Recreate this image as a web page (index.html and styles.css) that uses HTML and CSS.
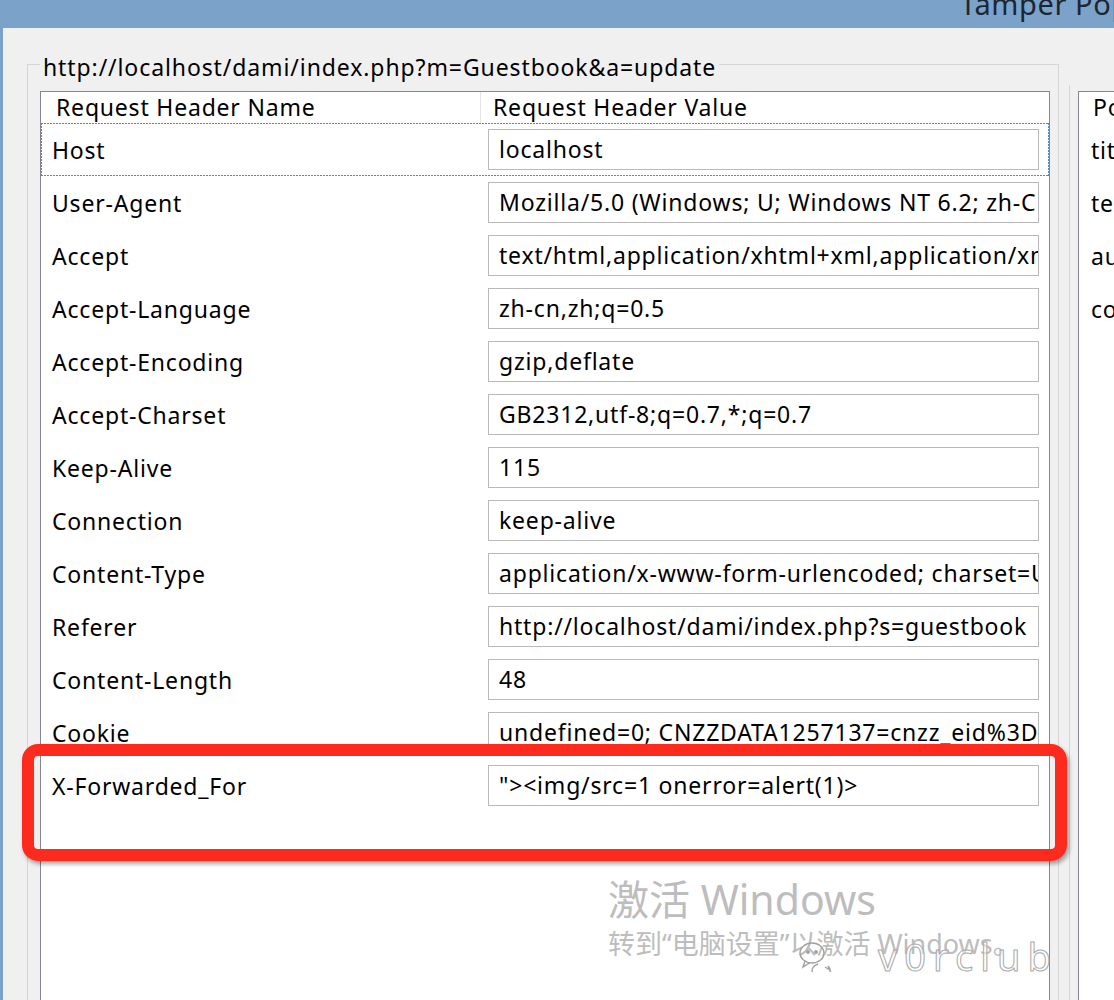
FILE: index.html
```html
<!DOCTYPE html>
<html>
<head>
<meta charset="utf-8">
<link rel="stylesheet" href="styles.css">
</head>
<body>
<div class="titlebar"><span class="title">Tamper Popup</span></div>
<div class="window">
  <fieldset class="group main">
    <legend>http://localhost/dami/index.php?m=Guestbook&amp;a=update</legend>
    <div class="list">
      <div class="head">
        <div class="hname">Request Header Name</div>
        <div class="hvalue">Request Header Value</div>
      </div>
      <div class="row focused"><div class="name">Host</div><div class="value"><div class="box">localhost</div></div></div>
      <div class="row"><div class="name">User-Agent</div><div class="value"><div class="box">Mozilla/5.0 (Windows; U; Windows NT 6.2; zh-CN; rv:1.9.2.8) Gecko/20100722 Firefox/3.6.8</div></div></div>
      <div class="row"><div class="name">Accept</div><div class="value"><div class="box">text/html,application/xhtml+xml,application/xml;q=0.9,*/*;q=0.8</div></div></div>
      <div class="row"><div class="name">Accept-Language</div><div class="value"><div class="box">zh-cn,zh;q=0.5</div></div></div>
      <div class="row"><div class="name">Accept-Encoding</div><div class="value"><div class="box">gzip,deflate</div></div></div>
      <div class="row"><div class="name">Accept-Charset</div><div class="value"><div class="box">GB2312,utf-8;q=0.7,*;q=0.7</div></div></div>
      <div class="row"><div class="name">Keep-Alive</div><div class="value"><div class="box">115</div></div></div>
      <div class="row"><div class="name">Connection</div><div class="value"><div class="box">keep-alive</div></div></div>
      <div class="row"><div class="name">Content-Type</div><div class="value"><div class="box">application/x-www-form-urlencoded; charset=UTF-8</div></div></div>
      <div class="row"><div class="name">Referer</div><div class="value"><div class="box">http://localhost/dami/index.php?s=guestbook</div></div></div>
      <div class="row"><div class="name">Content-Length</div><div class="value"><div class="box">48</div></div></div>
      <div class="row"><div class="name">Cookie</div><div class="value"><div class="box">undefined=0; CNZZDATA1257137=cnzz_eid%3D1234567890</div></div></div>
      <div class="row"><div class="name">X-Forwarded_For</div><div class="value"><div class="box">"&gt;&lt;img/src=1 onerror=alert(1)&gt;</div></div></div>
    </div>
  </fieldset>
  <div class="splitter"></div>
  <fieldset class="group side">
    <div class="list">
      <div class="head"><div class="hname">Post Parameter Name</div></div>
      <div class="row"><div class="name">title</div></div>
      <div class="row"><div class="name">text</div></div>
      <div class="row"><div class="name">author</div></div>
      <div class="row"><div class="name">content</div></div>
    </div>
  </fieldset>
</div>
<div class="highlight"></div>
<div class="watermark">
  <div class="wm1">激活 Windows</div>
  <div class="wm2">转到“电脑设置”以激活 Windows。</div>
  <div class="wechat">
    <svg width="34" height="32" viewBox="0 0 34 32" fill="none" stroke="#a0a0a0" stroke-width="1.4"><ellipse cx="14" cy="13" rx="12" ry="10"/><path d="M7 21 L5 27 L12 22.5"/><circle cx="10" cy="12" r="1.2" fill="#a0a0a0"/><circle cx="18" cy="12" r="1.2" fill="#a0a0a0"/><path d="M20 24 A9 7 0 1 0 30 26 L32 30 L27 27"/></svg>
    <span class="wmname">v0rclub</span>
  </div>
</div>
</body>
</html>
```
FILE: styles.css
```css
html, body {
  margin: 0;
  padding: 0;
}
body {
  width: 1114px;
  height: 1000px;
  overflow: hidden;
  background: #7ba2c8;
  font-family: "Noto Sans", "Open Sans", sans-serif;
  color: #000;
  position: relative;
}
.titlebar {
  height: 28px;
  overflow: hidden;
  white-space: nowrap;
  padding-left: 960px;
}
.title {
  display: block;
  font-size: 29px;
  line-height: 34px;
  margin-top: -13px;
  color: #1c2633;
  letter-spacing: 0.6px;
}
.window {
  margin-left: 3px;
  height: 972px;
  background: #f0f0f0;
  display: flex;
  align-items: flex-start;
  padding-left: 24px;
  box-sizing: border-box;
}
.group {
  margin: 0;
  border: 1px solid #d5d5d5;
  border-bottom: none;
  min-width: 0;
  box-sizing: border-box;
}
.main {
  flex: none;
  margin-top: 22px;
  width: 1032px;
  padding: 0 8px 0 12px;
  height: 960px;
}
.main legend {
  font-size: 23px;
  line-height: 22px;
  padding: 6px 3px 0;
  margin-left: 0;
  letter-spacing: 0.9px;
  white-space: nowrap;
}
.list {
  margin-top: 13px;
  background: #fff;
  border: 1px solid #828790;
  border-bottom: none;
  height: 920px;
  font-size: 23px;
  letter-spacing: 0.8px;
}
.head {
  display: flex;
  height: 31px;
  line-height: 31px;
  white-space: nowrap;
}
.hname {
  width: 424px;
  padding-left: 15px;
  border-right: 1px solid #e5e5e5;
}
.hvalue {
  padding-left: 12px;
}
.row {
  display: flex;
  height: 53px;
  box-sizing: border-box;
  align-items: center;
  padding: 1px;
  white-space: nowrap;
}
.row.focused {
  background:
    repeating-linear-gradient(90deg, #4f86cc 0 2px, transparent 2px 3px) left top / 100% 1px no-repeat,
    repeating-linear-gradient(90deg, #4f86cc 0 2px, transparent 2px 3px) left bottom / 100% 1px no-repeat,
    repeating-linear-gradient(180deg, #4f86cc 0 2px, transparent 2px 3px) left top / 1px 100% no-repeat,
    repeating-linear-gradient(180deg, #4f86cc 0 2px, transparent 2px 3px) right top / 1px 100% no-repeat;
}
.name {
  width: 440px;
  padding-left: 10px;
  box-sizing: border-box;
  flex: none;
}
.value {
  flex: 1;
  min-width: 0;
  padding: 0 9px 0 6px;
}
.box {
  height: 41px;
  box-sizing: border-box;
  border: 1px solid #b9b9b9;
  background: #fff;
  line-height: 38px;
  padding-left: 10px;
  overflow: hidden;
  white-space: nowrap;
}
.splitter {
  flex: none;
  margin-top: 57px;
  width: 10px;
  height: 915px;
}
.side {
  flex: 1;
  margin-top: 57px;
  height: 915px;
  padding: 0 0 0 8px;
  border-right: none;
  border-top: none;
  overflow: hidden;
}
.side .list {
  margin-top: 6px;
  border-right: none;
}
.side .hname {
  padding-left: 14px;
  border-right: none;
}
.side .name {
  padding-left: 11px;
}
.highlight {
  position: absolute;
  left: 22px;
  top: 744px;
  width: 1045px;
  height: 117px;
  box-sizing: border-box;
  border: 12px solid #fd2a1e;
  border-radius: 16px;
  box-shadow: 2px 3px 4px rgba(0, 0, 0, 0.35);
}
.watermark {
  position: absolute;
  left: 608px;
  top: 872px;
  color: #bdbdbd;
  font-family: "Noto Sans", "Noto Sans CJK SC", sans-serif;
  white-space: nowrap;
}
.wm1 {
  font-size: 41px;
  line-height: 54px;
}
.wm2 {
  font-size: 27px;
  line-height: 36px;
}
.wechat {
  position: absolute;
  left: 190px;
  top: 58px;
  display: flex;
  align-items: center;
  gap: 6px;
}
.wmname {
  font-size: 38px;
  letter-spacing: 7px;
  color: rgba(255, 255, 255, 0.55);
  -webkit-text-stroke: 1px #a8a8a8;
  margin-left: 40px;
}
```
